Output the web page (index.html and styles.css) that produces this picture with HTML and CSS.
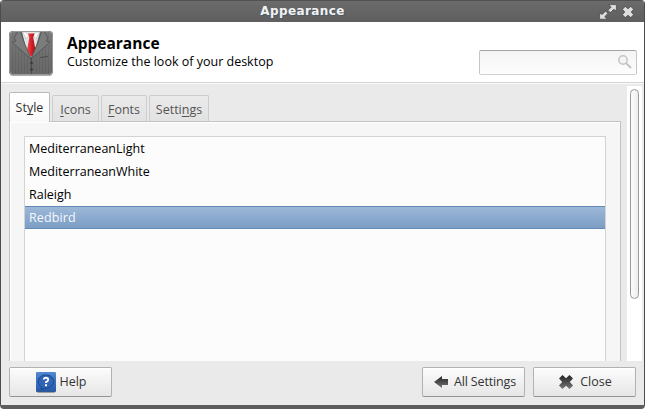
FILE: index.html
```html
<!DOCTYPE html>
<html lang="en">
<head>
<meta charset="utf-8">
<title>Appearance</title>
<link rel="stylesheet" href="styles.css">
</head>
<body>
<div class="window">
  <div class="titlebar">
    <span class="caption">Appearance</span>
    <div class="controls">
      <svg width="18" height="16" viewBox="0 0 18 16"><path d="M9.500.6H17.400V7L14.900 5.300 11.200 8.600 9 6.300 12.200 3zM.6 9 3 10.500 6.600 7.200 9 9.400 5.800 12.500 8 15.200H.6z" fill="#dedede" stroke="#444" stroke-width=".7"/></svg>
      <svg width="12" height="12" viewBox="0 0 12 12"><path d="M3.300.4 6 2.800 8.700.4 11.600 3.300 9.200 6l2.400 2.700-2.900 2.900L6 9.200l-2.700 2.400L.4 8.700 2.800 6 .4 3.300z" fill="#dedede" stroke="#444" stroke-width=".7"/></svg>
    </div>
  </div>
  <header class="header">
    <svg class="suit" width="46" height="46" viewBox="0 0 46 46">
      <defs>
        <pattern id="stripes" width="3" height="3" patternUnits="userSpaceOnUse"><path d="M0 0h3v3H0z" fill="#707070"/><path d="M1 0h1v3H1z" fill="#646464"/></pattern>
        <linearGradient id="shade" x2="0" y2="1"><stop stop-color="#888" stop-opacity=".5"/><stop offset="1" stop-color="#555" stop-opacity=".25"/></linearGradient>
        <linearGradient id="tie" x2="1" y2="0"><stop stop-color="#f05050"/><stop offset=".5" stop-color="#d92028"/><stop offset="1" stop-color="#a01018"/></linearGradient>
      </defs>
      <rect x="1" y="1" width="44" height="44" rx="4" fill="url(#stripes)"/>
      <rect x="1" y="1" width="44" height="44" rx="4" fill="url(#shade)"/>
      <path d="M14 1.500h18L28 16l-5 12L18 18z" fill="#e4e4e6"/>
      <path d="m17 2 4 3-3 4-3-7zM29 2l-4 3 3 4 3-7z" fill="#fff" stroke="#bbb" stroke-width=".6"/>
      <path d="M20 3.500h6.500L25.200 7.500 27.500 20 23 27 19 20l2.300-12.500z" fill="url(#tie)"/>
      <path d="M12.500 1.500 16 12l7 17L4 12l4-1-2-3 4-6.500zM33.500 1.500 30 12l-7 17L42 12l-4-1 2-3-4-6.500z" fill="#7c7c7c" stroke="#505050" stroke-width=".8"/>
      <path d="M23.500 29v15M32 27.500l8-1" stroke="#4c4c4c" fill="none"/>
      <circle cx="23.500" cy="33" r="1.300" fill="#383838"/><circle cx="23.500" cy="39.500" r="1.300" fill="#383838"/>
      <rect x="1.500" y="1.500" width="43" height="43" rx="4" fill="none" stroke="#999" stroke-width="1"/>
      <path d="M2 44.500q1 1 3 1h36q2 0 3-1" stroke="#aaa" fill="none"/>
    </svg>
    <div class="heading"><h1><span>Appearance</span></h1><p>Customize the look of your desktop</p></div>
    <div class="search">
      <svg width="16" height="16" viewBox="0 0 16 16"><circle cx="6" cy="6" r="4.200" fill="#f4f4f4" stroke="#c4c4c4" stroke-width="1.500"/><path d="m9.300 9.300 4.700 4.700" stroke="#c0c0c0" stroke-width="1.900"/></svg>
    </div>
  </header>
  <main class="content">
    <div class="notebook">
      <nav class="tabs">
        <div class="tab active">St<u>y</u>le</div>
        <div class="tab icons"><u>I</u>cons</div>
        <div class="tab fonts"><u>F</u>onts</div>
        <div class="tab settings">Setti<u>n</u>gs</div>
      </nav>
      <div class="page">
        <ul class="list">
          <li>MediterraneanLight</li>
          <li>MediterraneanWhite</li>
          <li>Raleigh</li>
          <li class="selected">Redbird</li>
        </ul>
      </div>
    </div>
    <div class="scrollbar"><div class="thumb"></div></div>
  </main>
  <footer class="footer">
    <div class="button help">
      <svg width="20" height="21" viewBox="0 0 20 21"><defs><linearGradient id="blue" x2="0" y2="1"><stop stop-color="#5089d4"/><stop offset="1" stop-color="#2458a8"/></linearGradient></defs><rect width="20" height="20.500" rx="2" fill="#555"/><rect width="20" height="19.700" rx="2" fill="url(#blue)"/><path d="M10 3c4.500 0 7.800 2.800 7.800 6.500S14.500 16 10 16l-5 1.500.7-2.500C3.500 14 2.200 12 2.200 9.500 2.200 5.800 5.500 3 10 3z" fill="#2f65b4" stroke="#1a4690"/><path d="M7.800 7.500Q8 5.700 10 5.700T12.200 7.700Q12.200 9 10 10.200V11" fill="none" stroke="#fff" stroke-width="1.900"/><path d="M9 12.300h2v2H9z" fill="#fff"/></svg>
      <span>Help</span>
    </div>
    <div class="button back">
      <svg width="14" height="12" viewBox="0 0 14 12"><defs><linearGradient id="dark" x2="0" y2="1"><stop stop-color="#222"/><stop offset="1" stop-color="#777"/></linearGradient></defs><path d="M0 6 8 0v3h6v6H8v3z" fill="url(#dark)"/></svg>
      <span>All Settings</span>
    </div>
    <div class="button close">
      <svg width="14" height="14" viewBox="0 0 14 14"><path d="M3.500 0 7 3.200 10.500 0 14 3.500 10.800 7 14 10.500 10.500 14 7 10.800 3.500 14 0 10.500 3.200 7 0 3.500z" fill="url(#dark)"/></svg>
      <span>Close</span>
    </div>
  </footer>
</div>
</body>
</html>
```
FILE: styles.css
```css
* { box-sizing: border-box; }
body { margin: 0; background: #fff; font: 12.5px/18px "Open Sans", "Noto Sans", sans-serif; color: #000; }
svg { display: block; flex: none; }
.window { width: 645px; height: 409px; display: flex; flex-direction: column; overflow: hidden; background: #eaeaea; border: 1px solid #4c4c4c; border-top: 0; border-bottom: 4px solid #5d5d5d; border-radius: 4px; }
.titlebar { height: 22px; flex: none; display: flex; align-items: center; background: linear-gradient(#6b6b6b, #5f5f5f); border-top: 1px solid #525252; }
.caption { flex: 1; padding-left: 1px; text-align: center; font: bold 12px/18px "DejaVu Sans", sans-serif; letter-spacing: .4px; color: #f2f2f2; text-shadow: 1px 1px 0 #4a5964; padding-bottom: 2px; }
.controls { display: flex; align-items: center; gap: 5px; padding-right: 10px; margin-left: -4px; }
.header { height: 61px; flex: none; display: flex; align-items: flex-start; padding: 8px 7px 0 7px; background: #fff; border-bottom: 1px solid #d4d4d4; }
.heading { margin-left: 13px; flex: 1; }
h1 { margin: 3px 0 0; font-size: 15.5px; line-height: 20px; font-weight: bold; }
p { margin: 0; line-height: 17px; }
.search { width: 158px; height: 25px; margin-top: 20px; display: flex; justify-content: flex-end; padding: 3px 3px 0 0; background: linear-gradient(#f4f4f4, #fdfdfd); border: 1px solid #c5c5c5; border-top-color: #a4a4a4; border-bottom-color: #d2d2d2; border-radius: 2px; }
.content { height: 278px; flex: none; display: flex; justify-content: space-between; padding: 0 2px 0 8px; border-top: 1px solid #f8f8f8; overflow: hidden; }
.notebook { width: 612px; padding-top: 8px; }
.tabs { height: 30px; display: flex; align-items: flex-end; gap: 2px; position: relative; z-index: 1; }
.tab { height: 27px; padding-top: 5px; text-align: center; color: #555; background: linear-gradient(#eaeaea, #e2e2e2); border: 1px solid #cdcdcd; border-bottom-color: #c0c0c0; border-radius: 2px 2px 0 0; }
.tab.active { width: 41px; height: 30px; padding-top: 6px; color: #333; background: linear-gradient(#fff, #f8f8f8); border-color: #b9b9b9; border-bottom: 0; }
.icons { width: 47px; }
.fonts { width: 46px; }
.settings { width: 60px; }
u { text-underline-offset: 2px; text-decoration-thickness: 1px; text-decoration-skip-ink: none; }
.page { height: 270px; margin-top: -1px; padding: 14px 14px 0; background: #f6f6f6; border: 1px solid #c2c2c2; box-shadow: inset 1px 1px 0 #fff; }
.list { height: 260px; margin: 0; padding: 0; list-style: none; background: #fcfcfc; border: 1px solid #d3d3d3; }
.list li { height: 23px; padding-left: 4px; line-height: 23px; }
.list .selected { color: #f5f8fc; background: linear-gradient(#9cb8d9, #7c9dc4); border: solid #6389b6; border-width: 1px 0; line-height: 21px; letter-spacing: .1px; }
.scrollbar { width: 15px; margin-top: 2px; padding: 3px 3px 0; background: #fff; }
.thumb { width: 9px; height: 210px; background: linear-gradient(90deg, #fcfcfc, #ededed); border: 1px solid #999; border-radius: 5px; }
.footer { display: flex; padding: 6px 8px 0 8px; }
.button { width: 103px; height: 30px; display: flex; align-items: center; justify-content: center; gap: 3px; padding-left: 2px; line-height: 16px; color: #333; background: linear-gradient(#fcfcfc, #e6e6e6); border: 1px solid #b2b2b2; border-bottom-color: #949494; border-radius: 2px; box-shadow: inset 0 1px #fff; }
.button span { padding-bottom: 1px; }
.help { margin-right: auto; }
.back { margin-right: 8px; gap: 6px; padding-left: 3px; letter-spacing: -.15px; }
.close { gap: 7px; }
```
